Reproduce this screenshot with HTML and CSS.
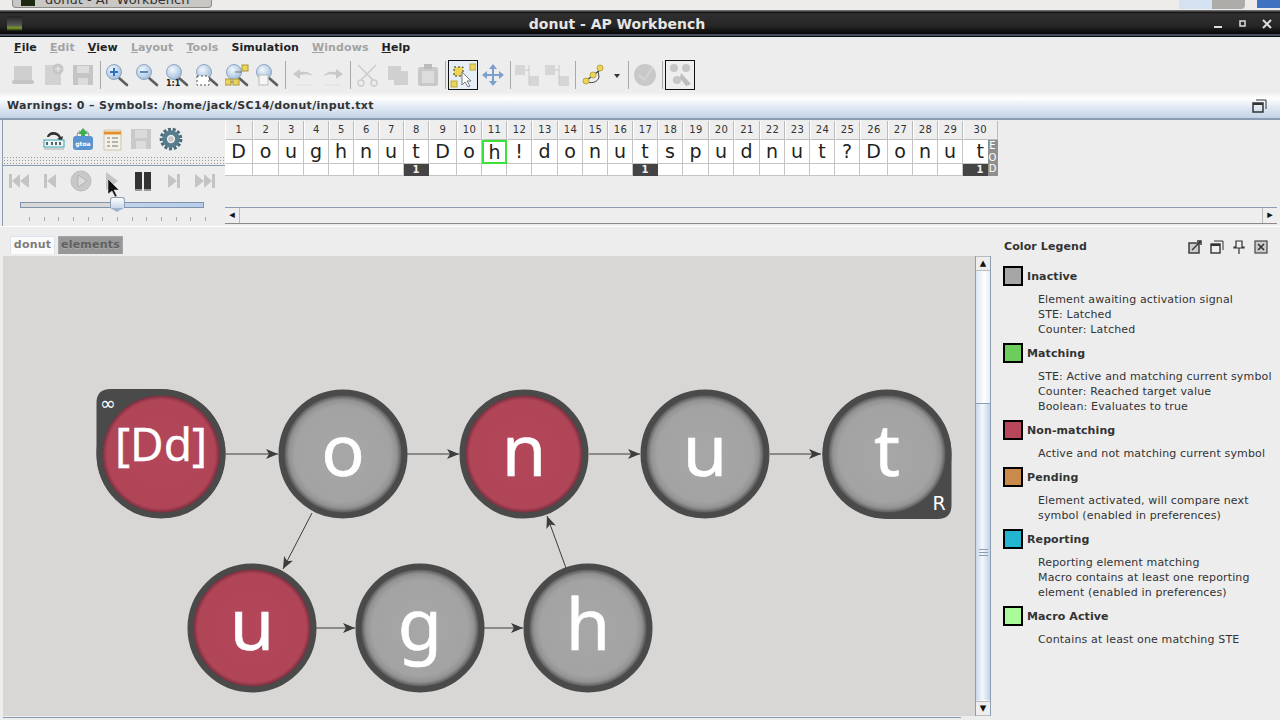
FILE: index.html
```html
<!DOCTYPE html>
<html>
  <head>
    <title>donut - AP Workbench</title>
    <link rel="stylesheet" href="styles.css">
  </head>
  <body>
    <svg class="defs">
      <defs>
        <radialGradient id="lensFill" cx="40%" cy="35%" r="70%">
          <stop offset="0" stop-color="#f2f7fd"/>
          <stop offset="1" stop-color="#9dbbdc"/>
        </radialGradient>
        <radialGradient id="grayFill">
          <stop offset="0" stop-color="#a7a7a7"/>
          <stop offset="0.78" stop-color="#a3a3a3"/>
          <stop offset="0.88" stop-color="#929292"/>
          <stop offset="0.95" stop-color="#5c5c5c"/>
        </radialGradient>
        <radialGradient id="redFill">
          <stop offset="0" stop-color="#b34659"/>
          <stop offset="0.88" stop-color="#b14558"/>
          <stop offset="0.95" stop-color="#7c3040"/>
        </radialGradient>
        <symbol id="lens" viewBox="0 0 24 24">
          <path d="M14 15l8 7" stroke="#5d5d5d" stroke-width="2.6" stroke-linecap="round"/>
          <circle cx="9" cy="9" r="7.5" fill="url(#lensFill)" stroke="#8fa6c0"/>
        </symbol>
        <marker id="arrow" markerWidth="14" markerHeight="10" refX="12" refY="5" orient="auto" markerUnits="userSpaceOnUse">
          <path d="M0 0L12 5L0 10L3 5z" fill="#3c3c3c"/>
        </marker>
      </defs>
    </svg>

    <div class="taskbar">
      <div class="task-btn"><span class="task-icon"></span>donut - AP Workbench</div>
      <div class="task-pager"><span class="pager-on"></span><span class="pager-off"></span></div>
      <span class="task-blue"></span>
    </div>

    <div class="titlebar">
      <span class="app-icon"></span>
      <span class="title-text">donut - AP Workbench</span>
      <div class="win-btns">
        <svg width="12" height="12" viewBox="0 0 12 12"><path d="M1 9h8" stroke="#ddd" stroke-width="2"/></svg>
        <svg width="12" height="12" viewBox="0 0 12 12"><rect x="3" y="3" width="5" height="5" fill="none" stroke="#ddd" stroke-width="1.5"/></svg>
        <svg width="12" height="12" viewBox="0 0 12 12"><path d="M2 2l8 8M10 2l-8 8" stroke="#ddd" stroke-width="2"/></svg>
      </div>
    </div>

    <div class="menubar">
      <span class="menu-item"><u>F</u>ile</span>
      <span class="menu-item off"><u>E</u>dit</span>
      <span class="menu-item"><u>V</u>iew</span>
      <span class="menu-item off"><u>L</u>ayout</span>
      <span class="menu-item off"><u>T</u>ools</span>
      <span class="menu-item">Simulation</span>
      <span class="menu-item off"><u>W</u>indows</span>
      <span class="menu-item"><u>H</u>elp</span>
    </div>

    <div class="toolbar">
      <span class="tool"><svg width="24" height="24" viewBox="0 0 24 24"><path d="M3 3h18v16H3z" fill="#cfcfcf"/><rect x="1" y="17" width="22" height="4" rx="2" fill="#c4c4c4"/></svg></span>
      <span class="tool"><svg width="24" height="24" viewBox="0 0 24 24"><path d="M4 2h12l4 5v15H4z" fill="#d2d2d2"/><circle cx="17" cy="6" r="5.5" fill="#c6c6c6"/><path d="M17 3v6M14 6h6" stroke="#e2e2e2" stroke-width="1.5"/></svg></span>
      <span class="tool"><svg width="24" height="24" viewBox="0 0 24 24"><path d="M2 2h20v20H2z" fill="#c5c5c5"/><path d="M6 3h12v7H6z" fill="#dedede"/><path d="M7 15h10v7H7z" fill="#dcdcdc"/></svg></span>
      <span class="tool-sep narrow"></span>
      <span class="tool"><svg width="24" height="24"><use href="#lens"/><path d="M9 5v8M5 9h8" stroke="#2d6fc0" stroke-width="2"/></svg></span>
      <span class="tool"><svg width="24" height="24"><use href="#lens"/><path d="M5 9h8" stroke="#5f86b4" stroke-width="2"/></svg></span>
      <span class="tool"><svg width="24" height="24"><use href="#lens"/><text x="1" y="23" class="one-one">1:1</text></svg></span>
      <span class="tool"><svg width="24" height="24"><use href="#lens"/><rect x="2" y="13" width="12" height="9" fill="#fff" stroke="#555" stroke-dasharray="2 2"/></svg></span>
      <span class="tool"><svg width="24" height="24"><use href="#lens"/><rect x="17" y="2" width="6" height="6" fill="#ecd35a" stroke="#a99a3a"/><rect x="0" y="16" width="6" height="6" fill="#ecd35a" stroke="#a99a3a"/><rect x="8" y="16" width="6" height="6" fill="#ecd35a" stroke="#a99a3a"/><path d="M10 9h7M6 19h2" stroke="#777"/></svg></span>
      <span class="tool"><svg width="24" height="24"><use href="#lens"/><rect x="4" y="12" width="9" height="10" fill="#f6f6f6" stroke="#bbb"/></svg></span>
      <span class="tool-sep wide"></span>
      <span class="tool"><svg width="24" height="24" viewBox="0 0 24 24"><path d="M2 11l7-5v3c5-1 10 0 13 4-4-2-9-2-13-1v4z" fill="#c9c9c9"/><path d="M4 22h16" stroke="#e0e0e0"/></svg></span>
      <span class="tool"><svg width="24" height="24" viewBox="0 0 24 24"><path d="M22 11l-7-5v3c-5-1-10 0-13 4 4-2 9-2 13-1v4z" fill="#c9c9c9"/><path d="M4 22h16" stroke="#e0e0e0"/></svg></span>
      <span class="tool-sep"></span>
      <span class="tool"><svg width="24" height="24" viewBox="0 0 24 24"><path d="M2 2l15 15M20 2L5 17" stroke="#cdcdcd" stroke-width="1.6"/><circle cx="5" cy="20" r="3" fill="none" stroke="#cdcdcd" stroke-width="1.5"/><circle cx="18" cy="20" r="3" fill="none" stroke="#cdcdcd" stroke-width="1.5"/></svg></span>
      <span class="tool"><svg width="24" height="24" viewBox="0 0 24 24"><path d="M2 3h13v5h7v14H8v-5H2z" fill="#d0d0d0"/></svg></span>
      <span class="tool"><svg width="24" height="24" viewBox="0 0 24 24"><rect x="2" y="4" width="20" height="19" rx="2" fill="#c9c9c9"/><rect x="8" y="1" width="8" height="5" fill="#bbb"/><rect x="6" y="8" width="12" height="12" fill="#dcdcdc"/></svg></span>
      <span class="tool-sep"></span>
      <span class="tool boxed"><svg width="26" height="26" viewBox="0 0 26 26"><rect x="20" y="2" width="6" height="6" fill="#ecd35a" stroke="#b8a63e"/><rect x="1" y="19" width="6" height="6" fill="#ecd35a" stroke="#b8a63e"/><rect x="4" y="5" width="9" height="9" fill="#ecd35a" stroke="#333" stroke-dasharray="2 2"/><path d="M12 10l0 13 3-3 3 5 2-1-3-5 4 0z" fill="#fff" stroke="#777"/></svg></span>
      <span class="tool"><svg width="24" height="24" viewBox="0 0 24 24"><path d="M12 1l4 5h-3v5h5V8l5 4-5 4v-3h-5v5h3l-4 5-4-5h3v-5H6v3l-5-4 5-4v3h5V6H8z" fill="#7d9fcb"/></svg></span>
      <span class="tool-sep narrow"></span>
      <span class="tool"><svg width="26" height="24" viewBox="0 0 26 24"><rect x="1" y="2" width="10" height="10" fill="#d6d6d6"/><rect x="15" y="13" width="10" height="10" fill="#d6d6d6"/><path d="M11 7h4M15 2v20" stroke="#c8c8c8"/></svg></span>
      <span class="tool"><svg width="26" height="24" viewBox="0 0 26 24"><rect x="1" y="2" width="10" height="10" fill="#d6d6d6"/><rect x="15" y="13" width="10" height="10" fill="#d6d6d6"/><path d="M11 7h4M15 2v20" stroke="#c8c8c8"/></svg></span>
      <span class="tool-sep wide"></span>
      <span class="tool"><svg width="24" height="24" viewBox="0 0 24 24"><path d="M5 18c3 3 12 2 13-4l-1-6" fill="none" stroke="#444"/><path d="M6 17L19 7" stroke="#444" stroke-width="1.5"/><circle cx="5" cy="18" r="3" fill="#ecd35a" stroke="#b8a63e"/><circle cx="12" cy="12" r="3" fill="#ecd35a" stroke="#b8a63e"/><circle cx="19" cy="5" r="3" fill="#ecd35a" stroke="#b8a63e"/></svg></span>
      <span class="tool-caret"></span>
      <span class="tool-sep narrow"></span>
      <span class="tool"><svg width="26" height="26" viewBox="0 0 26 26"><circle cx="13" cy="13" r="11" fill="#c8c8c8"/><path d="M7 13l5 5 9-13" fill="none" stroke="#d4d4d4" stroke-width="2"/></svg></span>
      <span class="tool-sep"></span>
      <span class="tool boxed plain"><svg width="26" height="26" viewBox="0 0 26 26"><circle cx="7" cy="6" r="4" fill="#c6c6c6"/><circle cx="19" cy="6" r="4" fill="#c6c6c6"/><circle cx="10" cy="18" r="4" fill="#c6c6c6"/><path d="M14 11l10 11-5 2-6-8z" fill="#bdbdbd"/></svg></span>
    </div>

    <div class="statusbar">
      <span>Warnings: 0 – Symbols: /home/jack/SC14/donut/input.txt</span>
      <svg width="16" height="14" viewBox="0 0 16 14"><rect x="1" y="4" width="10" height="9" fill="none" stroke="#333" stroke-width="1.5"/><path d="M1 5h10" stroke="#333" stroke-width="2"/><path d="M4 1h10v9" fill="none" stroke="#333"/></svg>
    </div>

    <div class="sim-row">
      <div class="sim-controls">
        <div class="sim-tools">
          <svg width="22" height="22" viewBox="0 0 22 22"><path d="M4 9c1-6 11-7 14 0l2-1-1 5-5-2 2-1c-2-4-8-4-10-1z" fill="#333"/><rect x="1" y="12" width="20" height="7" fill="#eaf6f8" stroke="#3aa3b0"/><path d="M4 14v3M9 14v3M13 14v3M17 14v3" stroke="#222" stroke-width="1.4"/><path d="M1 21h20" stroke="#aaa"/></svg>
          <svg width="22" height="24" viewBox="0 0 22 24"><path d="M11 1l5 6h-3v3H9V7H6z" fill="#3cb050"/><rect x="1" y="9" width="20" height="14" rx="3" fill="#5a94d0"/><path d="M5 9c0-3 2-5 3-5M17 9c0-3-2-5-3-5" fill="none" stroke="#888"/><text x="11" y="19" class="gtoa">gtoa</text></svg>
          <svg width="22" height="24" viewBox="0 0 22 24"><path d="M3 3h17v20H3z" fill="#f4f1e6" stroke="#cbc6b4"/><path d="M3 6h17" stroke="#e2902a" stroke-width="3"/><path d="M6 11h3M11 11h6M6 15h3M11 15h6M6 19h3M11 19h6" stroke="#777"/></svg>
          <svg width="22" height="22" viewBox="0 0 22 22"><path d="M1 1h20v20H1z" fill="#c9c9c9"/><path d="M5 2h12v8H5z" fill="#dadada"/><path d="M6 13h10v8H6z" fill="#dcdcdc"/></svg>
          <svg width="24" height="24" viewBox="0 0 26 26"><circle cx="13" cy="13" r="10.5" fill="none" stroke="#4c6a76" stroke-width="3.6" stroke-dasharray="3.2 1.9"/><circle cx="13" cy="13" r="7" fill="none" stroke="#557d8c" stroke-width="5"/><circle cx="13" cy="13" r="3" fill="#c8c8c8"/></svg>
        </div>
        <div class="sim-grip"></div>
        <div class="sim-player">
          <svg width="22" height="14" viewBox="0 0 22 14"><path d="M1 0h3v14H1zM12 0v14L4 7zM21 0v14l-9-7z" fill="#c4c4c4"/></svg>
          <svg width="14" height="14" viewBox="0 0 14 14"><path d="M1 0h3v14H1zM13 0v14L4 7z" fill="#c4c4c4"/></svg>
          <svg width="22" height="22" viewBox="0 0 22 22"><circle cx="11" cy="11" r="10" fill="#c8c8c8" stroke="#bdbdbd"/><path d="M8 5l9 6-9 6z" fill="#dcdcdc" stroke="#b4b4b4"/></svg>
          <svg width="14" height="20" viewBox="0 0 14 20"><path d="M1 1l12 9-12 9z" fill="#c4c4c4"/></svg>
          <svg width="18" height="20" viewBox="0 0 18 20"><path d="M1 1h7v17H1zM10 1h7v17h-7z" fill="#333"/><path d="M1 18h7v2H1zM10 18h7v2h-7z" fill="#999"/></svg>
          <svg width="14" height="14" viewBox="0 0 14 14"><path d="M1 0v14l9-7zM10 0h3v14h-3z" fill="#c4c4c4"/></svg>
          <svg width="22" height="14" viewBox="0 0 22 14"><path d="M1 0v14l9-7zM10 0v14l8-7zM18 0h3v14h-3z" fill="#c4c4c4"/></svg>
        </div>
        <div class="sim-slider"><span class="slider-thumb"></span></div>
        <div class="sim-ticks"></div>
        <svg class="mouse-cursor" width="12" height="20" viewBox="0 0 12 20"><path d="M1 1v15l4-3 3 6 2-1-3-6h5z" fill="#111" stroke="#eee" stroke-width="0.5"/></svg>
      </div>

      <div class="sim-seq">
        <div class="seq-table">
          <div class="head">1</div><div class="head">2</div><div class="head">3</div><div class="head">4</div><div class="head">5</div><div class="head">6</div><div class="head">7</div><div class="head">8</div><div class="head">9</div><div class="head">10</div><div class="head">11</div><div class="head">12</div><div class="head">13</div><div class="head">14</div><div class="head">15</div><div class="head">16</div><div class="head">17</div><div class="head">18</div><div class="head">19</div><div class="head">20</div><div class="head">21</div><div class="head">22</div><div class="head">23</div><div class="head">24</div><div class="head">25</div><div class="head">26</div><div class="head">27</div><div class="head">28</div><div class="head">29</div><div class="head last">30</div>
          <div class="sym">D</div><div class="sym">o</div><div class="sym">u</div><div class="sym">g</div><div class="sym">h</div><div class="sym">n</div><div class="sym">u</div><div class="sym">t</div><div class="sym">D</div><div class="sym">o</div><div class="sym now">h</div><div class="sym">!</div><div class="sym">d</div><div class="sym">o</div><div class="sym">n</div><div class="sym">u</div><div class="sym">t</div><div class="sym">s</div><div class="sym">p</div><div class="sym">u</div><div class="sym">d</div><div class="sym">n</div><div class="sym">u</div><div class="sym">t</div><div class="sym">?</div><div class="sym">D</div><div class="sym">o</div><div class="sym">n</div><div class="sym">u</div><div class="sym end">t</div>
          <div class="eod">E<br>O<br>D</div>
          <div class="rep"></div><div class="rep"></div><div class="rep"></div><div class="rep"></div><div class="rep"></div><div class="rep"></div><div class="rep"></div><div class="rep hit">1</div><div class="rep"></div><div class="rep"></div><div class="rep"></div><div class="rep"></div><div class="rep"></div><div class="rep"></div><div class="rep"></div><div class="rep"></div><div class="rep hit">1</div><div class="rep"></div><div class="rep"></div><div class="rep"></div><div class="rep"></div><div class="rep"></div><div class="rep"></div><div class="rep"></div><div class="rep"></div><div class="rep"></div><div class="rep"></div><div class="rep"></div><div class="rep"></div><div class="rep hit end">1</div>
        </div>
        <div class="hscroll">
          <span class="hs-btn">&#9666;</span>
          <span class="hs-track"></span>
          <span class="hs-btn right">&#9656;</span>
        </div>
      </div>
    </div>

    <div class="work-row">
      <div class="work-left">
        <div class="tabs">
          <span class="tab active">donut</span>
          <span class="tab">elements</span>
        </div>
        <div class="graph-wrap">
          <svg class="graph" width="972" height="460" viewBox="3 256 972 460">
            <g class="edges">
              <path d="M226 454H278" marker-end="url(#arrow)"/>
              <path d="M407 454H459" marker-end="url(#arrow)"/>
              <path d="M589 454H640" marker-end="url(#arrow)"/>
              <path d="M770 454H821" marker-end="url(#arrow)"/>
              <path d="M312 513L283 569" marker-end="url(#arrow)"/>
              <path d="M316 628H355" marker-end="url(#arrow)"/>
              <path d="M484 628H523" marker-end="url(#arrow)"/>
              <path d="M566 568L547 516" marker-end="url(#arrow)"/>
            </g>
            <path class="shell" d="M96.500 454V403Q96.500 389 110.500 389H161A64.500 64.500 0 1 1 96.500 454z"/>
            <path class="shell" d="M951.500 454V505Q951.500 519 937.500 519H887A64.500 64.500 0 1 1 951.500 454z"/>
            <circle class="node" cx="161" cy="454" r="61.500" fill="url(#redFill)"/>
            <circle class="node" cx="343" cy="454" r="61.500" fill="url(#grayFill)"/>
            <circle class="node" cx="524" cy="454" r="61.500" fill="url(#redFill)"/>
            <circle class="node" cx="705" cy="454" r="61.500" fill="url(#grayFill)"/>
            <circle class="node" cx="887" cy="454" r="61.500" fill="url(#grayFill)"/>
            <circle class="node" cx="252" cy="628" r="61.500" fill="url(#redFill)"/>
            <circle class="node" cx="420" cy="628" r="61.500" fill="url(#grayFill)"/>
            <circle class="node" cx="588" cy="628" r="61.500" fill="url(#grayFill)"/>
            <text class="label small" x="161" y="461">[Dd]</text>
            <text class="label" x="343" y="476">o</text>
            <text class="label" x="524" y="476">n</text>
            <text class="label" x="705" y="476">u</text>
            <text class="label" x="887" y="476">t</text>
            <text class="label" x="252" y="650">u</text>
            <text class="label" x="420" y="650">g</text>
            <text class="label" x="588" y="650">h</text>
            <text class="tag" x="108" y="410">∞</text>
            <text class="tag" x="939" y="510">R</text>
          </svg>
          <div class="vscroll">
            <span class="vs-btn">&#9652;</span>
            <span class="vs-track"></span>
            <span class="vs-thumb"><i></i></span>
            <span class="vs-btn">&#9662;</span>
          </div>
        </div>
        <div class="bottom-scroll"></div>
      </div>

      <div class="legend">
        <div class="legend-head">
          <span class="legend-title">Color Legend</span>
          <div class="legend-icons">
            <svg width="14" height="14" viewBox="0 0 14 14"><rect x="1" y="3" width="10" height="10" fill="#ccc" stroke="#333" stroke-width="1.4"/><path d="M4 10l9-9M9 1h4v4" fill="none" stroke="#333" stroke-width="1.4"/></svg>
            <svg width="14" height="14" viewBox="0 0 14 14"><rect x="1" y="4" width="9" height="9" fill="none" stroke="#333" stroke-width="1.4"/><path d="M1 5h9" stroke="#333" stroke-width="2"/><path d="M4 1h9v9" fill="none" stroke="#333"/></svg>
            <svg width="14" height="14" viewBox="0 0 14 14"><path d="M4 1h6v6h2v1H2V7h2zM7 8v6" fill="none" stroke="#333" stroke-width="1.2"/></svg>
            <svg width="14" height="14" viewBox="0 0 14 14"><rect x="1" y="1" width="12" height="12" fill="#ccc" stroke="#444" stroke-width="1.2"/><path d="M4 4l6 6M10 4l-6 6" stroke="#333" stroke-width="1.6"/></svg>
          </div>
        </div>
        <div class="legend-item">
          <div class="legend-label"><span class="swatch s-inactive"></span><span>Inactive</span></div>
          <p>Element awaiting activation signal<br>STE: Latched<br>Counter: Latched</p>
        </div>
        <div class="legend-item">
          <div class="legend-label"><span class="swatch s-match"></span><span>Matching</span></div>
          <p>STE: Active and matching current symbol<br>Counter: Reached target value<br>Boolean: Evaluates to true</p>
        </div>
        <div class="legend-item">
          <div class="legend-label"><span class="swatch s-nomatch"></span><span>Non-matching</span></div>
          <p>Active and not matching current symbol</p>
        </div>
        <div class="legend-item">
          <div class="legend-label"><span class="swatch s-pending"></span><span>Pending</span></div>
          <p>Element activated, will compare next<br>symbol (enabled in preferences)</p>
        </div>
        <div class="legend-item">
          <div class="legend-label"><span class="swatch s-report"></span><span>Reporting</span></div>
          <p>Reporting element matching<br>Macro contains at least one reporting<br>element (enabled in preferences)</p>
        </div>
        <div class="legend-item">
          <div class="legend-label"><span class="swatch s-macro"></span><span>Macro Active</span></div>
          <p>Contains at least one matching STE</p>
        </div>
      </div>
    </div>
  </body>
</html>
```

FILE: styles.css
```css
html,
body {
  margin: 0;
  height: 720px;
  overflow: hidden;
}
body {
  background-color: #ededed;
  font-family: "DejaVu Sans", sans-serif;
  font-size: 12px;
  color: #333;
}
.defs {
  position: absolute;
  width: 0;
  height: 0;
}

/* desktop strip and window title */
.taskbar {
  height: 10px;
  background-color: #edecea;
  display: flex;
  overflow: hidden;
}
.task-btn {
  margin-left: 12px;
  width: 200px;
  height: 8px;
  background-color: #c9c7c4;
  border: 1px solid #8c8a86;
  border-top: 0;
  border-radius: 0 0 4px 4px;
  box-sizing: border-box;
  display: flex;
  align-items: flex-start;
  gap: 10px;
  padding-left: 8px;
  font-size: 13px;
  line-height: 0;
  color: #333;
}
.task-icon {
  width: 14px;
  height: 6px;
  background-color: #1c2a14;
  flex: none;
}
.task-pager {
  margin-left: auto;
  display: flex;
  height: 9px;
}
.pager-on {
  width: 33px;
  background-color: #d5e2f2;
}
.pager-off {
  width: 33px;
  background-color: #aeaca9;
  border-radius: 0 0 4px 0;
}
.task-blue {
  width: 23px;
  height: 8px;
  margin-left: 12px;
  background-color: #3f73c0;
}
.titlebar {
  height: 27px;
  box-sizing: border-box;
  background: linear-gradient(to bottom, #6e6e6e 0, #6e6e6e 1px, #111 2px, #2f2f2f 4px, #262626 16px, #0b0b0b 23px, #0b0b0b 24px, #7f8fb0 25px, #0b0b0b 26px);
  position: relative;
  display: flex;
  align-items: center;
  padding-left: 7px;
}
.app-icon {
  width: 15px;
  height: 15px;
  background: linear-gradient(to bottom, #222 0, #555 60%, #7c9a2a 80%, #111 100%);
}
.title-text {
  position: absolute;
  left: 0;
  width: 1234px;
  text-align: center;
  font-weight: bold;
  font-size: 14px;
  color: #e6e6e6;
}
.win-btns {
  margin-left: auto;
  display: flex;
  gap: 12px;
  padding-right: 7px;
}

/* menu and tools */
.menubar {
  height: 21px;
  margin-bottom: 2px;
  display: flex;
  align-items: center;
  padding-left: 14px;
  font-weight: bold;
  font-size: 11px;
  letter-spacing: 0.1px;
  color: #222;
}
.menu-item {
  margin-right: 13px;
}
.menu-item.off {
  color: #a3a3a3;
}
.toolbar {
  height: 32px;
  display: flex;
  padding-left: 8px;
  box-sizing: border-box;
  align-items: flex-start;
}
.tool {
  width: 30px;
  height: 30px;
  display: flex;
  align-items: center;
  justify-content: center;
  box-sizing: border-box;
  flex: none;
}
.tool.boxed {
  border: 1px solid #111;
  background-color: #e6eef7;
}
.tool.boxed.plain {
  background-color: #eee;
}
.tool-sep {
  width: 1px;
  height: 28px;
  margin: 1px 2px;
  background-color: #a9a9a9;
  flex: none;
}
.tool-sep.narrow {
  margin: 1px 1.500px;
}
.tool-sep.wide {
  margin: 1px 2.500px;
}
.tool-caret {
  width: 0;
  height: 0;
  margin: 14px 6px 0 6px;
  border: 3px solid transparent;
  border-top: 4px solid #333;
  border-bottom: 0;
}
.one-one {
  font-size: 8px;
  font-weight: bold;
  fill: #222;
}
.gtoa {
  font-size: 6px;
  font-weight: bold;
  fill: #fff;
  text-anchor: middle;
}
.statusbar {
  height: 26px;
  box-sizing: border-box;
  background: linear-gradient(to bottom, #edecea 0, #ffffff 6px, #e4ecf5 14px, #c3d3e5 26px);
  display: flex;
  align-items: center;
  justify-content: space-between;
  padding: 1px 12px 0 7px;
  font-weight: bold;
  font-size: 11px;
  letter-spacing: 0.32px;
  color: #333;
}

/* simulation strip */
.sim-row {
  height: 108px;
  display: flex;
  border-top: 2px solid #8b9db3;
  box-sizing: border-box;
  margin-bottom: 4px;
  box-shadow: 0 1px 0 #fff;
}
.sim-controls {
  width: 223px;
  margin-left: 2px;
  border-left: 1px solid #8b9db3;
  box-sizing: border-box;
  position: relative;
  flex: none;
}
.sim-tools {
  height: 37px;
  display: flex;
  align-items: center;
  gap: 7px;
  padding-left: 40px;
}
.sim-grip {
  height: 8px;
  background-image: radial-gradient(#9a9a9a 0.8px, transparent 1px);
  background-size: 3px 3px;
  background-position: 0 2px;
  border-bottom: 1px solid #8b9db3;
}
.sim-player {
  height: 31px;
  margin-top: -1px;
  display: grid;
  grid-template-columns: repeat(7, 31px);
  justify-items: center;
  align-items: center;
  padding-left: 0.5px;
}
.sim-slider {
  height: 6px;
  margin: 6px 0 0 17px;
  width: 184px;
  box-sizing: border-box;
  border: 1px solid #7f93ad;
  background: linear-gradient(to right, #d8d8d8 0, #d8d8d8 52%, #c3d4ea 52%, #b7cde8 100%);
  position: relative;
}
.slider-thumb {
  position: absolute;
  left: 89px;
  top: -6px;
  width: 13px;
  height: 10px;
  background: linear-gradient(to bottom, #fff, #c7d7ea);
  border: 1px solid #8b9db3;
  border-bottom: 0;
  border-radius: 3px 3px 0 0;
}
.slider-thumb::after {
  content: "";
  position: absolute;
  left: -1px;
  top: 10px;
  border-left: 7.500px solid transparent;
  border-right: 7.500px solid transparent;
  border-top: 4px solid #9fb4cc;
}
.sim-ticks {
  height: 4px;
  margin: 9px 0 0 26px;
  width: 177px;
  background-image: repeating-linear-gradient(to right, #aaa 0, #aaa 1px, transparent 1px, transparent 14.67px);
}
.mouse-cursor {
  position: absolute;
  left: 104px;
  top: 58px;
}
.sim-seq {
  flex: 1;
  min-width: 0;
  height: 104px;
}
.seq-table {
  display: grid;
  grid-template-columns: 28px 26px 25px 25px 25px 25px 25px 25px 28px 25px 25px 25px 26px 25px 25px 25px 25px 25px 26px 25px 26px 25px 25px 25px 25px 28px 25px 25px 25px 24.5px 10px;
  grid-template-rows: 19px 24px 12px;
  width: 772.500px;
  margin-top: 1px;
}
.head {
  font-size: 10px;
  letter-spacing: 0.5px;
  text-align: center;
  line-height: 18px;
  background-color: #eee;
  border-right: 1px solid #bcbcbc;
  border-left: 1px solid #fff;
  border-bottom: 1px solid #bcbcbc;
  box-sizing: border-box;
}
.head.last {
  grid-column: span 2;
}
.sym {
  background-color: #fff;
  border-right: 1px solid #c4c4c4;
  border-bottom: 1px solid #c4c4c4;
  box-sizing: border-box;
  text-align: center;
  font-size: 19px;
  line-height: 23px;
  color: #222;
}
.sym.now {
  border: 2px solid #3ee03a;
  line-height: 21px;
}
.sym.end {
  text-indent: 10px;
  border-right: 0;
}
.eod {
  grid-row: 2 / span 2;
  grid-column: 31;
  background-color: #8f8f8f;
  color: #fff;
  font-size: 10px;
  line-height: 11.600px;
  text-align: center;
}
.rep {
  background-color: #fff;
  border-right: 1px solid #c4c4c4;
  border-bottom: 1px solid #c4c4c4;
  box-sizing: border-box;
  font-size: 10px;
  line-height: 11px;
  text-align: center;
  color: #eee;
  font-weight: bold;
}
.rep.hit {
  background-color: #444;
  border-color: #444;
}
.rep.hit.end {
  text-align: right;
  padding-right: 3px;
}
.hscroll {
  height: 15px;
  margin-top: 31px;
  display: flex;
  border-top: 1px solid #8b9db3;
  border-bottom: 1px solid #8a8a8a;
  margin-right: 3px;
}
.hs-btn {
  width: 15px;
  text-align: center;
  font-size: 11px;
  line-height: 13px;
  color: #111;
  background-color: #eee;
  border-right: 1px solid #bbb;
  box-sizing: border-box;
}
.hs-btn.right {
  border-right: 0;
  border-left: 1px solid #bbb;
}
.hs-track {
  flex: 1;
  background-color: #eee;
}

/* graph and legend */
.work-row {
  display: flex;
  height: 490px;
}
.work-left {
  width: 991px;
  flex: none;
  padding-left: 3px;
  box-sizing: border-box;
}
.tabs {
  height: 26px;
  box-sizing: border-box;
  padding: 6px 0 0 7px;
  display: flex;
  gap: 3px;
}
.tab {
  width: 65px;
  height: 18px;
  box-sizing: border-box;
  text-align: center;
  font-weight: bold;
  font-size: 11px;
  letter-spacing: 0.2px;
  line-height: 16px;
  background-color: #979797;
  border: 1px solid #a6a6a6;
  border-bottom: 0;
  color: #5f5f5f;
  text-shadow: 0 1px 0 #aaa;
}
.tab.active {
  width: 45px;
  background-color: #fbfbfb;
  color: #7d7d7d;
  text-shadow: none;
  border-color: #dbe3ec;
}
.graph-wrap {
  display: flex;
  height: 460px;
}
.graph {
  background-color: #d8d7d5;
  display: block;
  flex: none;
}
.edges path {
  stroke: #3c3c3c;
  stroke-width: 1;
  fill: none;
}
.shell {
  fill: #4a4a4a;
}
.node {
  stroke: #4a4a4a;
  stroke-width: 6;
}
.label {
  font-family: "Noto Sans", sans-serif;
  font-size: 72px;
  fill: #fff;
  stroke: #fff;
  stroke-width: 0.6;
  text-anchor: middle;
}
.label.small {
  font-size: 46px;
  stroke-width: 0.3;
}
.tag {
  font-size: 19px;
  fill: #fff;
  text-anchor: middle;
}
.vscroll {
  width: 16px;
  display: flex;
  flex-direction: column;
  position: relative;
  border-left: 1px solid #8b9db3;
  border-right: 1px solid #8b9db3;
  box-sizing: border-box;
  background: linear-gradient(to right, #dbe6f3, #ffffff 60%, #e6edf5);
}
.vs-btn {
  height: 15px;
  flex: none;
  background-color: #eee;
  border-top: 1px solid #bbb;
  border-bottom: 1px solid #bbb;
  box-sizing: border-box;
  text-align: center;
  font-size: 13px;
  line-height: 12px;
  color: #111;
}
.vs-track {
  flex: 1;
}
.vs-thumb {
  position: absolute;
  left: 0;
  right: 0;
  top: 147px;
  height: 296px;
  background: linear-gradient(to right, #c9d8ea, #f5f8fc 45%, #c2d3e8);
  border-top: 1px solid #8b9db3;
  display: flex;
  align-items: center;
  justify-content: center;
}
.vs-thumb i {
  width: 9px;
  height: 5px;
  border-top: 1px solid #8b9db3;
  border-bottom: 1px solid #8b9db3;
  background: linear-gradient(to bottom, transparent 40%, #8b9db3 40%, #8b9db3 60%, transparent 60%);
}
.bottom-scroll {
  height: 2px;
  margin-top: 1px;
  border-top: 1px solid #8b9db3;
  margin-right: 30px;
}
.legend {
  flex: 1;
  min-width: 0;
  padding: 0 0 0 12px;
}
.legend-head {
  height: 36px;
  box-sizing: border-box;
  display: flex;
  align-items: center;
  justify-content: space-between;
  padding: 0 12px 3px 1px;
  font-weight: bold;
  font-size: 11px;
  letter-spacing: 0.1px;
}
.legend-icons {
  display: flex;
  gap: 8px;
}
.legend-item p {
  margin: 6px 0 6px 35px;
  line-height: 15px;
  font-size: 11px;
  letter-spacing: 0.15px;
  white-space: nowrap;
}
.legend-label {
  height: 20px;
  display: flex;
  align-items: center;
  gap: 4px;
  font-weight: bold;
  font-size: 11px;
  letter-spacing: 0.1px;
}
.legend-label span:last-child {
  padding-top: 1px;
}
.swatch {
  width: 20px;
  height: 20px;
  border: 2px solid #000;
  box-sizing: border-box;
  flex: none;
}
.s-inactive { background-color: #a6a6a6; }
.s-match { background-color: #6ccc5c; }
.s-nomatch { background-color: #b8475b; }
.s-pending { background-color: #c98a4a; }
.s-report { background-color: #22b4d0; }
.s-macro { background-color: #a9fb9a; }
```
